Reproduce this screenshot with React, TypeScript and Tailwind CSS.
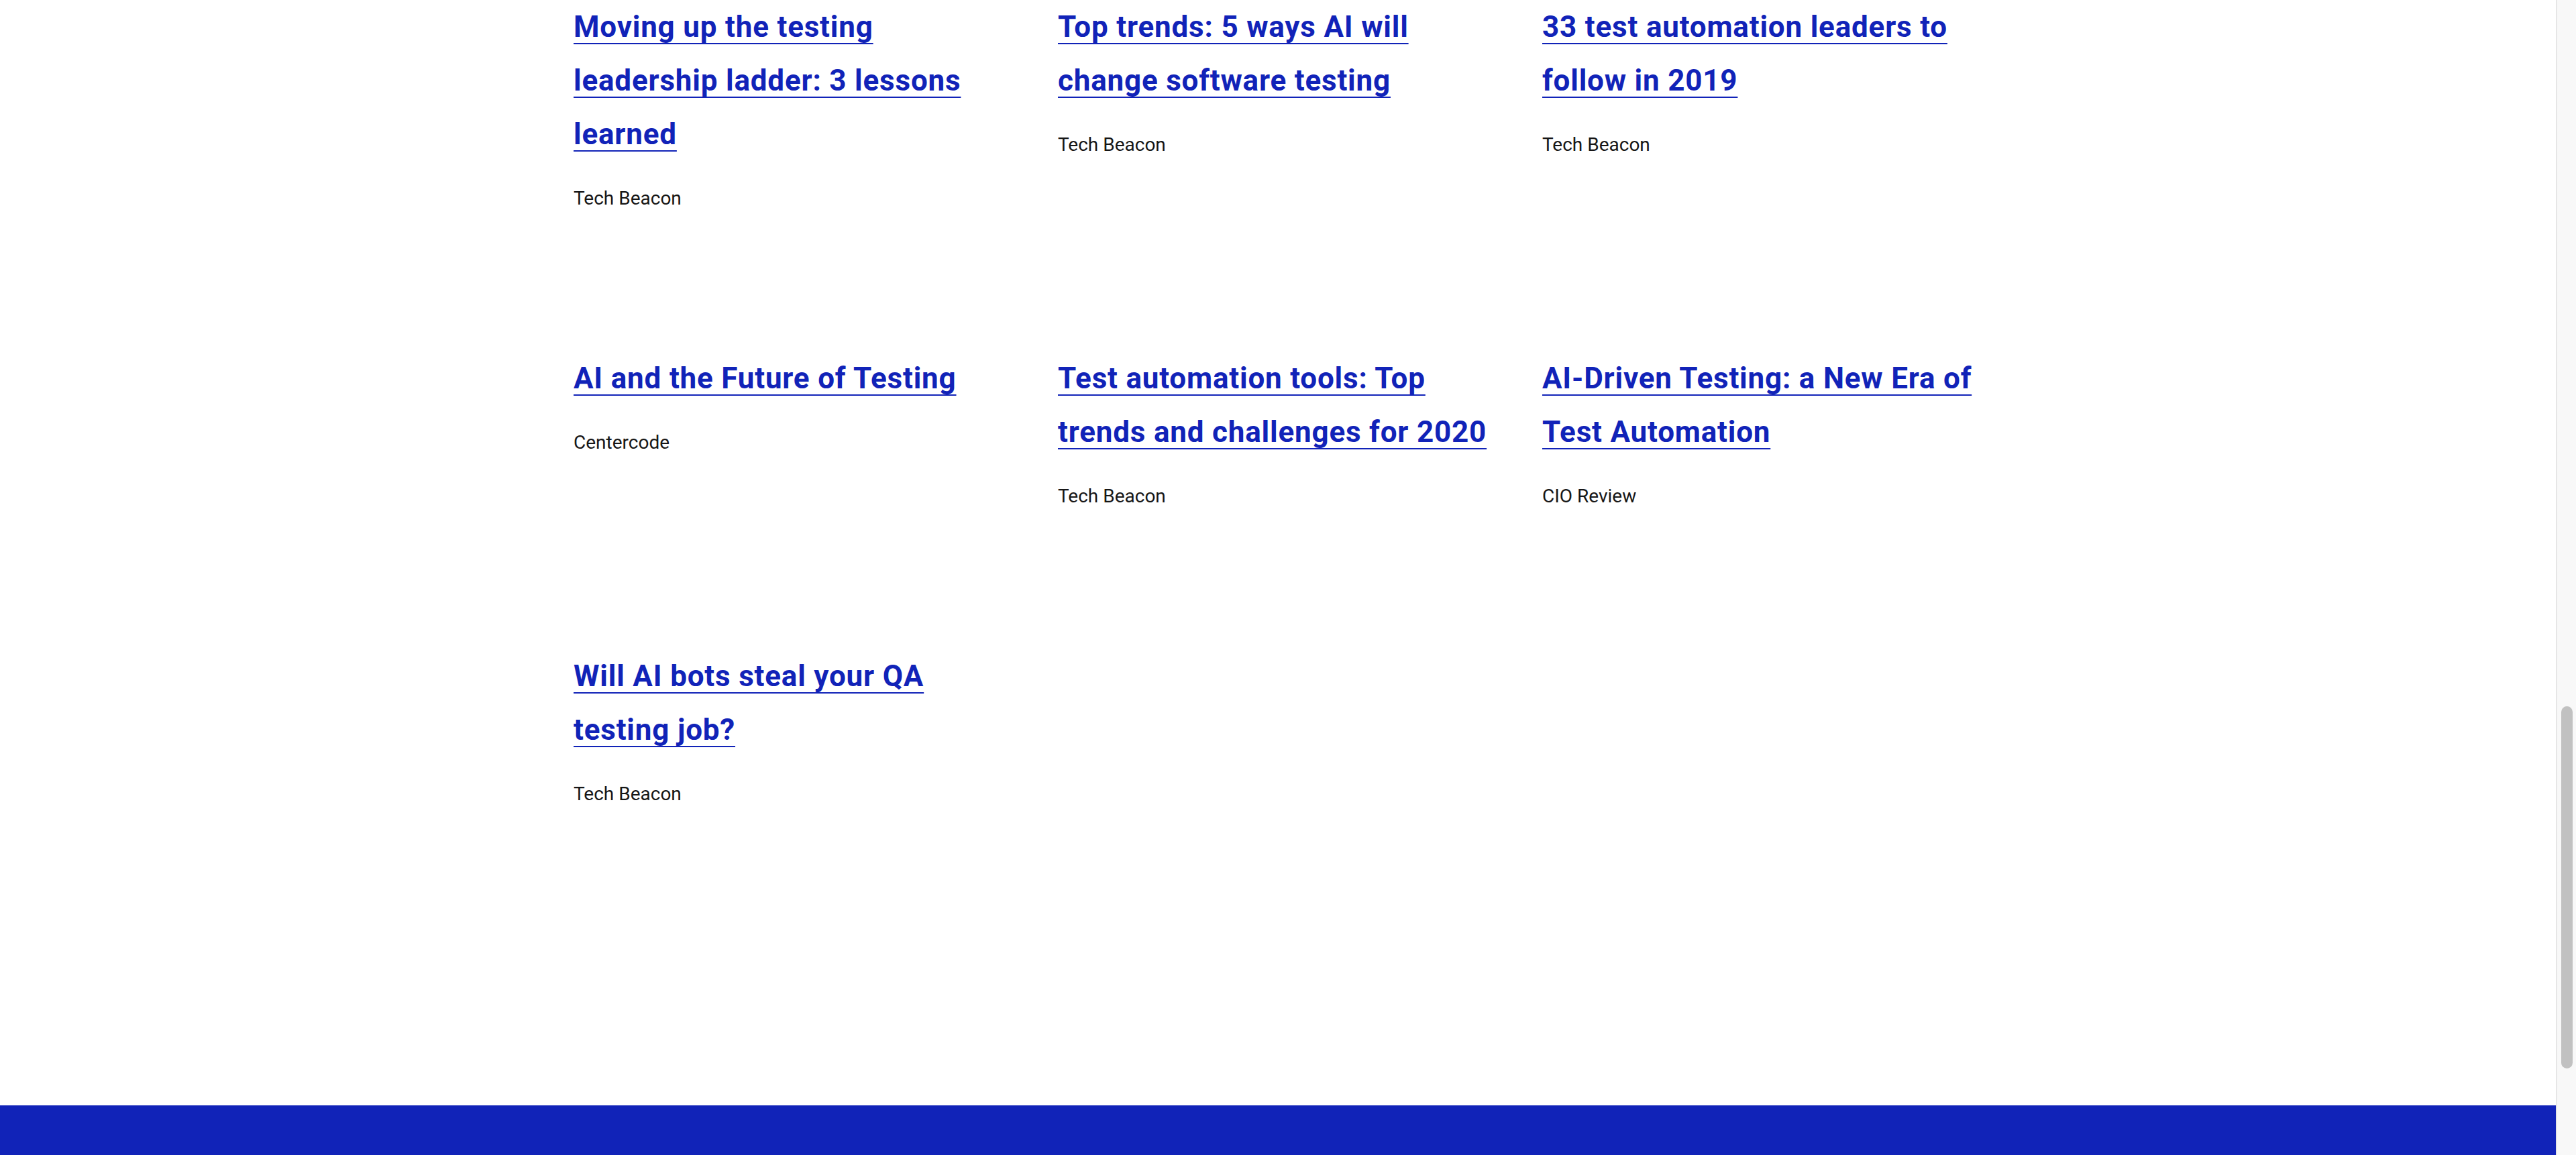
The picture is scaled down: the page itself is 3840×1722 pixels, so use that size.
const articles = [
  { title: "Moving up the testing leadership ladder: 3 lessons learned", source: "Tech Beacon" },
  { title: "Top trends: 5 ways AI will change software testing", source: "Tech Beacon" },
  { title: "33 test automation leaders to follow in 2019", source: "Tech Beacon" },
  { title: "AI and the Future of Testing", source: "Centercode" },
  { title: "Test automation tools: Top trends and challenges for 2020", source: "Tech Beacon" },
  { title: "AI-Driven Testing: a New Era of Test Automation", source: "CIO Review" },
  { title: "Will AI bots steal your QA testing job?", source: "Tech Beacon" },
];

export default function App() {
  return (
    <div
      className="flex h-[1722px] w-full overflow-hidden bg-white"
      style={{ fontFamily: "Roboto, 'Liberation Sans', sans-serif" }}
    >
      {/* Page */}
      <div className="flex flex-1 flex-col">
        <div className="flex-1 pl-[855px]">
          <div className="grid grid-cols-[repeat(3,722px)] gap-y-[208px]">
            {articles.map((a) => (
              <div key={a.title} className="pr-[66px]">
                <a
                  href="#"
                  className="text-[44px] font-bold leading-[80px] tracking-[0.8px] text-[#1123b8] underline decoration-2 underline-offset-[9px]"
                >
                  {a.title}
                </a>
                <p className="mt-[36px] text-[28px] leading-[40px] text-[#161616]">{a.source}</p>
              </div>
            ))}
          </div>
        </div>

        {/* Footer */}
        <footer className="h-[74px] bg-[#1123b8]" />
      </div>

      {/* Scrollbar */}
      <div className="flex w-[30px] flex-col border-l-2 border-[#e6e6e6] bg-[#f8f8f8] pl-[6px] pr-[5px] pt-[1053px]">
        <div className="h-[540px] rounded-full bg-[#c1c1c1]" />
      </div>
    </div>
  );
}
